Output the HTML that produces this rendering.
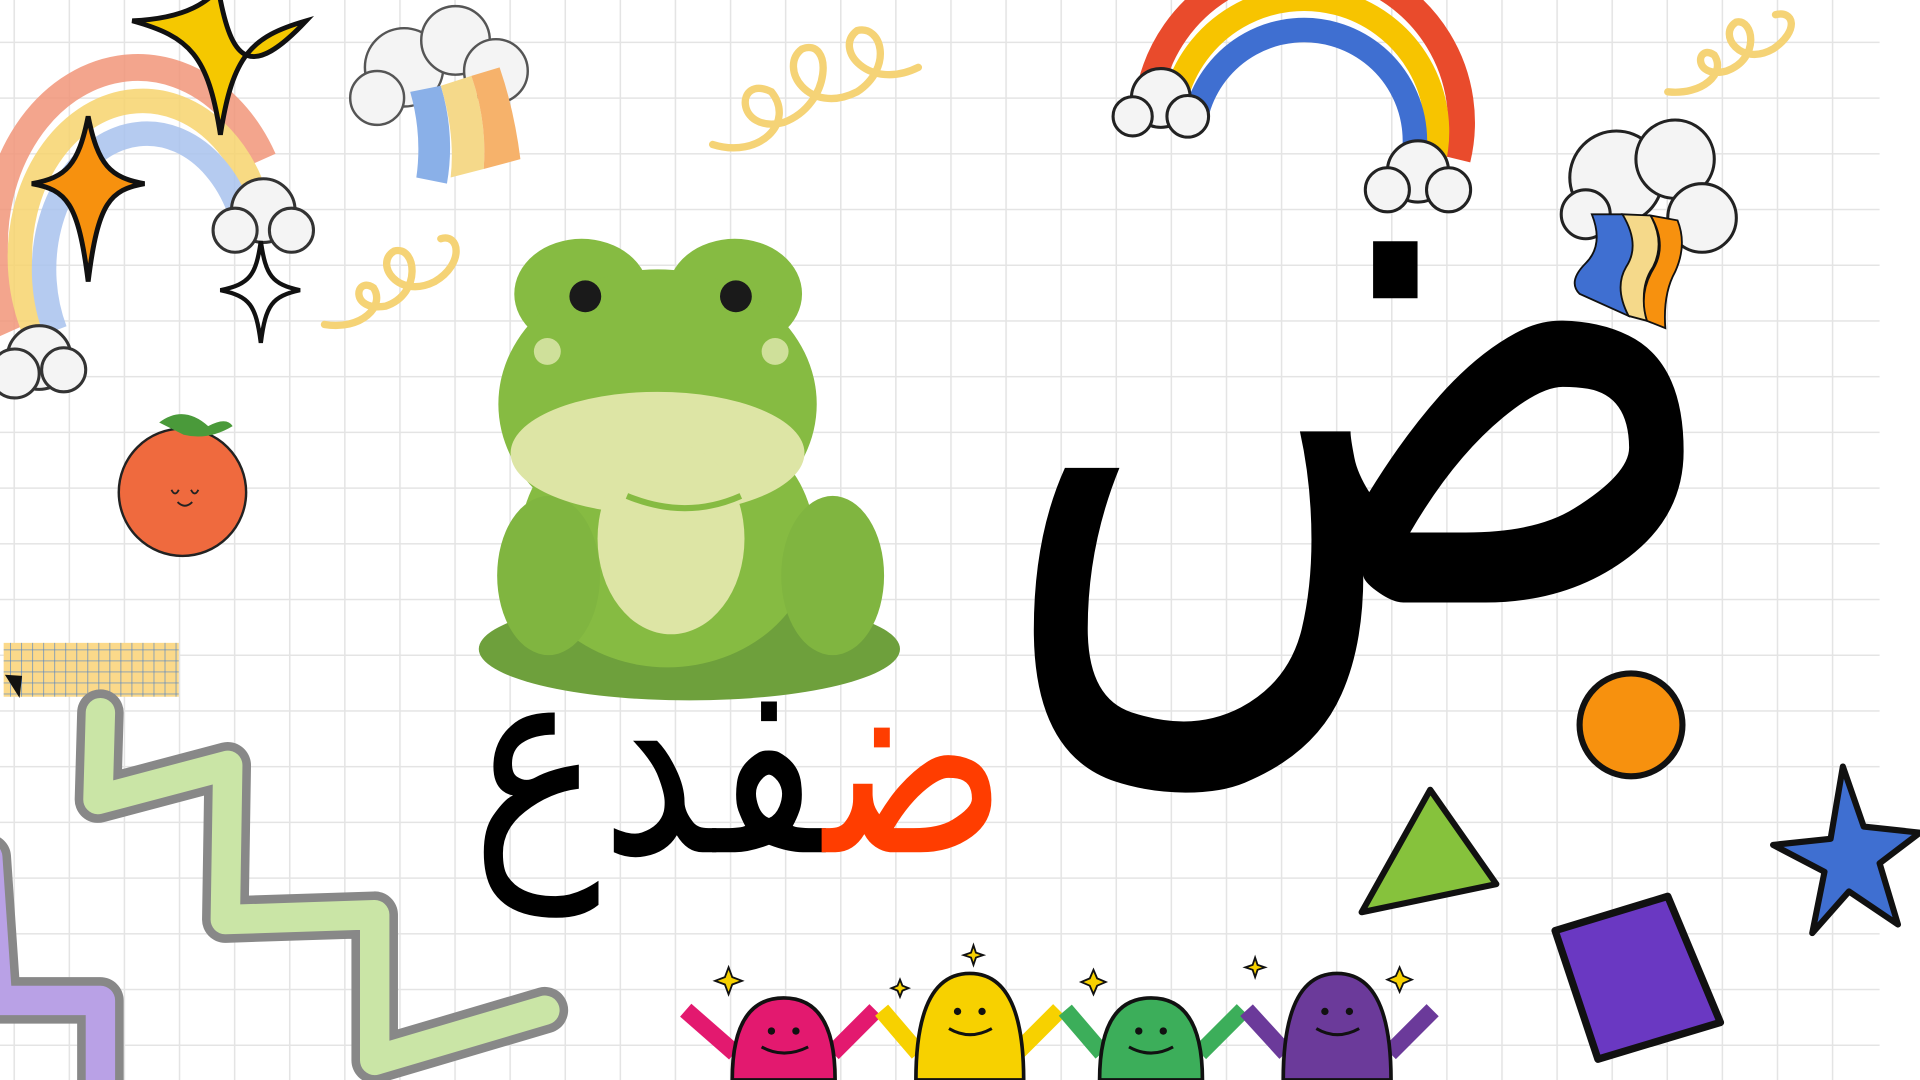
<!DOCTYPE html>
<html><head><meta charset="utf-8">
<style>
html,body{margin:0;padding:0;width:1920px;height:1080px;overflow:hidden;background:#fff}
svg{display:block}
</style></head>
<body>
<svg width="1920" height="1080" viewBox="0 0 1568 882" xmlns="http://www.w3.org/2000/svg">
<defs>
<pattern id="g" width="45" height="45.5" patternUnits="userSpaceOnUse" x="11" y="34">
<path d="M0 0V45.5M0 0H45" stroke="#e4e4e4" stroke-width="2.5" fill="none"/>
</pattern>
<pattern id="g2" width="9" height="9" patternUnits="userSpaceOnUse">
<path d="M9 0V9M0 9H9" stroke="#4a80c8" stroke-width="1" fill="none"/>
</pattern>
</defs>
<rect width="1568" height="882" fill="#fff"/>
<rect x="0" y="0" width="1535" height="882" fill="url(#g)"/>

<g fill="none" opacity="0.85">
<path d="M10 270 A105 130 0 0 1 215 130" stroke="#f2967a" stroke-width="22"/>
<path d="M28 270 A88 112 0 0 1 205 150" stroke="#f7d46e" stroke-width="20"/>
<path d="M45 270 A72 95 0 0 1 195 170" stroke="#a9c3ee" stroke-width="20"/>
</g>
<g fill="#f4f4f4" stroke="#333" stroke-width="2.5">
<circle cx="215" cy="172" r="26"/><circle cx="192" cy="188" r="18"/><circle cx="238" cy="188" r="18"/>
<circle cx="32" cy="292" r="26"/><circle cx="12" cy="305" r="20"/><circle cx="52" cy="302" r="18"/>
</g>
<path d="M180 0 C190 50 205 65 250 17 C205 30 190 45 180 110 C170 45 155 30 108 17 C155 15 170 0 180 -10Z" fill="#f5c800" stroke="#111" stroke-width="4"/>
<path d="M72 95 C80 135 90 145 118 150 C90 155 80 165 72 230 C64 165 54 155 26 150 C54 145 64 135 72 95Z" fill="#f7910e" stroke="#111" stroke-width="4"/>
<path d="M213 197 C217 225 222 232 245 237 C222 242 217 249 213 280 C209 249 204 242 180 237 C204 232 209 225 213 197Z" fill="#fff" stroke="#111" stroke-width="3.5"/>
<g fill="#f4f4f4" stroke="#555" stroke-width="2">
<circle cx="330" cy="55" r="32"/><circle cx="372" cy="33" r="28"/><circle cx="405" cy="58" r="26"/><circle cx="308" cy="80" r="22"/>
</g>
<path d="M335 75 Q345 110 340 145 L365 150 Q372 110 360 70Z" fill="#8ab0e8"/>
<path d="M360 70 Q372 110 368 145 L395 138 Q398 100 385 62Z" fill="#f5d98a"/>
<path d="M385 62 Q398 100 395 138 L425 130 Q420 90 408 55Z" fill="#f6b26b"/>
<g fill="none" stroke="#f5d376" stroke-width="6" stroke-linecap="round">
<path d="M582 118 C620 130 650 100 630 75 C600 60 600 110 640 100 C680 85 680 30 655 40 C635 55 660 95 700 75 C730 55 720 20 700 25 C680 40 710 75 750 55"/>
<path d="M265 265 C295 270 315 250 305 235 C290 225 285 255 315 250 C345 240 340 200 322 205 C305 215 325 245 355 230 C380 215 375 190 360 195"/>
<path d="M1362 75 C1390 78 1410 60 1400 45 C1385 35 1382 65 1410 58 C1438 48 1432 15 1418 18 C1402 28 1422 55 1448 40 C1470 25 1465 8 1450 12"/>
</g>
<g fill="none">
<path d="M940 70 A125 125 0 0 1 1190 130" stroke="#e94b2c" stroke-width="22"/>
<path d="M960 80 A105 105 0 0 1 1170 135" stroke="#f7c400" stroke-width="20"/>
<path d="M978 90 A88 88 0 0 1 1152 140" stroke="#3f6fd1" stroke-width="20"/>
</g>
<g fill="#f4f4f4" stroke="#222" stroke-width="2.5">
<circle cx="948" cy="80" r="24"/><circle cx="925" cy="95" r="16"/><circle cx="970" cy="95" r="17"/>
<circle cx="1158" cy="140" r="25"/><circle cx="1133" cy="155" r="18"/><circle cx="1183" cy="155" r="18"/>
</g>
<g fill="#f4f4f4" stroke="#222" stroke-width="2.5">
<circle cx="1320" cy="145" r="38"/><circle cx="1368" cy="130" r="32"/><circle cx="1390" cy="178" r="28"/><circle cx="1295" cy="175" r="20"/>
</g>
<path d="M1300 175 Q1310 200 1295 215 Q1280 230 1290 240 L1330 258 Q1320 230 1330 215 Q1340 195 1325 175Z" fill="#3f6fd1" stroke="#111" stroke-width="1.5"/>
<path d="M1325 175 Q1340 200 1328 218 Q1318 235 1330 258 L1345 262 Q1338 235 1350 218 Q1360 198 1348 176Z" fill="#f5d98a" stroke="#111" stroke-width="1.5"/>
<path d="M1348 176 Q1362 200 1350 220 Q1338 240 1345 262 L1360 268 Q1358 240 1368 222 Q1378 200 1370 180Z" fill="#f7910e" stroke="#111" stroke-width="1.5"/>
<ellipse cx="149" cy="402" rx="52" ry="52" fill="#ef6a3e" stroke="#222" stroke-width="2"/>
<path d="M130 345 Q150 330 170 348 Q185 340 190 348 Q170 360 150 355Z" fill="#4a9a3a"/>
<path d="M140 400 q3 6 6 0 M156 400 q3 6 6 0 M145 410 q6 6 12 0" stroke="#222" stroke-width="1.5" fill="none"/>
<rect x="3" y="525" width="143" height="44" fill="#fbd98a"/>
<rect x="3" y="525" width="143" height="44" fill="url(#g2)"/>
<path d="M4 551 L18 552 L16 570Z" fill="#111"/>
<g fill="none" stroke-linejoin="round" stroke-linecap="round">
<path d="M82 582 L80 653 L186 625 L184 751 L306 747 L306 866 L445 825" stroke="#888" stroke-width="38"/>
<path d="M82 582 L80 653 L186 625 L184 751 L306 747 L306 866 L445 825" stroke="#cae5a6" stroke-width="24"/>
<path d="M-10 700 L-2 817 L82 817 L82 900" stroke="#888" stroke-width="38"/>
<path d="M-10 700 L-2 817 L82 817 L82 900" stroke="#b9a1e6" stroke-width="24"/>
</g>
<ellipse cx="563" cy="530" rx="172" ry="42" fill="#6ea03c"/>
<ellipse cx="475" cy="240" rx="55" ry="45" fill="#86bb42"/>
<ellipse cx="600" cy="240" rx="55" ry="45" fill="#86bb42"/>
<ellipse cx="537" cy="330" rx="130" ry="110" fill="#86bb42"/>
<ellipse cx="545" cy="440" rx="120" ry="105" fill="#86bb42"/>
<ellipse cx="448" cy="470" rx="42" ry="65" fill="#80b540"/>
<ellipse cx="680" cy="470" rx="42" ry="65" fill="#80b540"/>
<ellipse cx="537" cy="370" rx="120" ry="50" fill="#dde5a5"/>
<ellipse cx="548" cy="440" rx="60" ry="78" fill="#dde5a5"/>
<circle cx="478" cy="242" r="13" fill="#1a1a1a"/><circle cx="601" cy="242" r="13" fill="#1a1a1a"/>
<circle cx="447" cy="287" r="11" fill="#cfe09a"/><circle cx="633" cy="287" r="11" fill="#cfe09a"/>
<path d="M512 405 Q560 425 605 405" stroke="#86bb42" stroke-width="5" fill="none"/>
<g transform="translate(385,696) scale(1.04,1.29)">
<text x="0" y="0" text-anchor="end" direction="rtl" font-family="DejaVu Sans, sans-serif" font-size="170" fill="#000"><tspan fill="#ff3d00">ض</tspan>فدع</text>
</g>
<g transform="translate(1412,492) scale(0.826,1.06)">
<text x="0" y="0" text-anchor="end" font-family="DejaVu Sans, sans-serif" font-size="600" fill="#000">ض</text>
</g>
<ellipse cx="1332" cy="592" rx="42" ry="42" fill="#f7910e" stroke="#111" stroke-width="5"/>
<path d="M1168 645 L1112 745 L1222 722Z" fill="#86c23c" stroke="#111" stroke-width="5" stroke-linejoin="round"/>
<path d="M1505 626 L1522 675 L1568 680 L1535 705 L1550 755 L1510 728 L1480 762 L1490 712 L1448 690 L1495 685Z" fill="#3f6fd1" stroke="#111" stroke-width="5" stroke-linejoin="round"/>
<path d="M1270 760 L1362 732 L1405 835 L1305 865Z" fill="#6a38c2" stroke="#111" stroke-width="6" stroke-linejoin="round"/>
<g stroke="#111" stroke-width="3">
<path d="M560 825 L600 860" stroke="#e3196f" stroke-width="14"/><path d="M715 825 L680 860" stroke="#e3196f" stroke-width="14"/>
<path d="M598 882 Q598 815 640 815 Q682 815 682 882Z" fill="#e3196f"/>
<path d="M720 825 L750 860" stroke="#f7d100" stroke-width="14"/><path d="M865 825 L830 860" stroke="#f7d100" stroke-width="14"/>
<path d="M748 882 Q748 795 792 795 Q836 795 836 882Z" fill="#f7d100"/>
<path d="M870 825 L900 860" stroke="#3cae5a" stroke-width="14"/><path d="M1015 825 L980 860" stroke="#3cae5a" stroke-width="14"/>
<path d="M898 882 Q898 815 940 815 Q982 815 982 882Z" fill="#3cae5a"/>
<path d="M1018 825 L1050 860" stroke="#6b3a9a" stroke-width="14"/><path d="M1170 825 L1135 860" stroke="#6b3a9a" stroke-width="14"/>
<path d="M1048 882 Q1048 795 1092 795 Q1136 795 1136 882Z" fill="#6b3a9a"/>
</g>
<g fill="none" stroke="#111" stroke-width="2.5">
<path d="M622 855 Q640 865 660 855"/><path d="M775 840 Q792 850 810 840"/><path d="M922 855 Q940 865 958 855"/><path d="M1075 840 Q1092 850 1110 840"/>
</g>
<g fill="#111"><circle cx="630" cy="842" r="3"/><circle cx="650" cy="842" r="3"/><circle cx="782" cy="826" r="3"/><circle cx="802" cy="826" r="3"/><circle cx="930" cy="842" r="3"/><circle cx="950" cy="842" r="3"/><circle cx="1082" cy="826" r="3"/><circle cx="1102" cy="826" r="3"/></g>
<g fill="#f7d100" stroke="#111" stroke-width="1.5">
<path d="M595 790 l3 8 8 3 -8 3 -3 8 -3 -8 -8 -3 8 -3Z"/><path d="M795 772 l2 6 6 2 -6 2 -2 6 -2 -6 -6 -2 6 -2Z"/><path d="M893 792 l3 7 7 3 -7 3 -3 7 -3 -7 -7 -3 7 -3Z"/><path d="M1025 782 l2 6 6 2 -6 2 -2 6 -2 -6 -6 -2 6 -2Z"/><path d="M1143 790 l3 7 7 3 -7 3 -3 7 -3 -7 -7 -3 7 -3Z"/><path d="M735 800 l2 5 5 2 -5 2 -2 5 -2 -5 -5 -2 5 -2Z"/>
</g>
</svg>
</body></html>
